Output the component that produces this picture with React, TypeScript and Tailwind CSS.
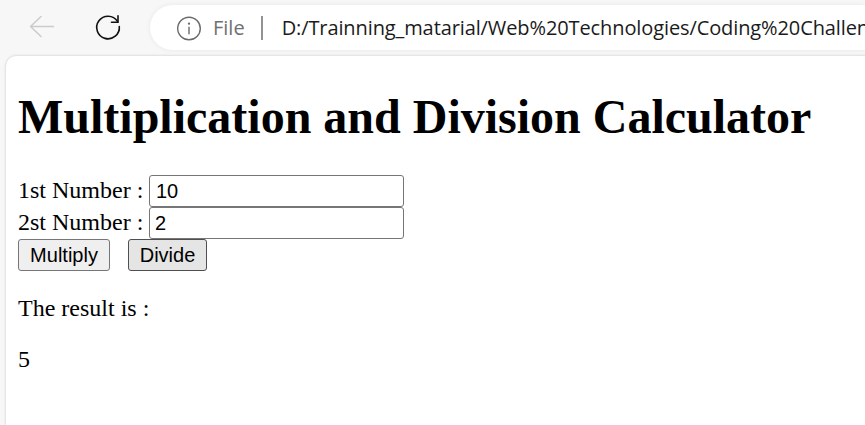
import React from "react";

export default function App() {
  return (
    <div className="h-[425px] w-[865px] overflow-hidden bg-[#f7f7f7] font-['Liberation_Serif',serif] text-black">
      <div className="flex h-[56px] items-start">
        <svg className="mt-[13px] ml-[28px] h-[28px] w-[28px] shrink-0" viewBox="0 0 28 28" fill="none" stroke="#cbcbcb" strokeWidth="1.5" strokeLinecap="round" strokeLinejoin="round">
          <path d="M25.500 13.500H2.500M13 3.500L2.500 13.500L13 23.500" />
        </svg>
        <svg className="mt-[13px] ml-[38px] h-[28px] w-[28px] shrink-0" viewBox="0 0 28 28" fill="none" stroke="#111111" strokeWidth="1.6" strokeLinecap="round">
          <path d="M25.300 13.500A11.300 11.300 0 1 1 23.500 8.300" />
          <path d="M24 2.700V9.300H17.500" strokeLinejoin="miter" />
        </svg>
        <div className="mt-[5px] ml-[28px] flex h-[45px] w-[715px] shrink-0 items-center overflow-hidden rounded-l-full bg-white font-['Open_Sans',sans-serif] text-[20px] shadow-[0_0_5px_rgba(0,0,0,0.07)]">
          <svg className="ml-[26px] h-[26px] w-[26px] shrink-0" viewBox="0 0 26 26" fill="none" stroke="#6b6b6b" strokeWidth="1.4">
            <circle cx="13" cy="13.500" r="11.300" />
            <path d="M13 11.700v7.600" />
            <circle cx="13" cy="8.700" r="1.150" fill="#6b6b6b" stroke="none" />
          </svg>
          <span className="ml-[11px] w-[32px] text-[#707070]">File</span>
          <span className="ml-[16px] h-[24px] w-[2px] shrink-0 bg-[#929292]" />
          <span className="ml-[19px] whitespace-nowrap tracking-[-0.105px] text-[#1b1b1b]">D:/Trainning_matarial/Web%20Technologies/Coding%20Challen</span>
        </div>
      </div>
      <main className="ml-[6px] h-[369px] w-[880px] rounded-tl-[10px] bg-white pl-[12px] pt-[33px] text-[24px] leading-[28px] shadow-[0_0_3px_rgba(0,0,0,0.2)]">
        <h1 className="whitespace-nowrap text-[48px] leading-[55px] font-bold">Multiplication and Division Calculator</h1>
        <div className="mt-[31px] flex h-[32px] items-center">
          <label className="-mt-[2px] w-[131px] whitespace-nowrap">1st Number :</label>
          <input className="h-[32px] w-[255px] rounded-[3px] border border-[#767676] bg-white px-[6px] font-['Liberation_Sans',sans-serif] text-[20px]" defaultValue="10" />
        </div>
        <div className="flex h-[32px] items-center">
          <label className="-mt-[2px] w-[131px] whitespace-nowrap">2st Number :</label>
          <input className="h-[32px] w-[255px] rounded-[3px] border border-[#767676] bg-white px-[5px] font-['Liberation_Sans',sans-serif] text-[20px]" defaultValue="2" />
        </div>
        <div className="flex gap-[18px] font-['Liberation_Sans',sans-serif] text-[20px]">
          <button className="h-[32px] w-[92px] rounded-[3px] border border-[#767676] bg-[#efefef]">Multiply</button>
          <button className="h-[32px] w-[79px] rounded-[3px] border border-[#4f4f4f] bg-[#e5e5e5]">Divide</button>
        </div>
        <p className="mt-[23px]">The result is :</p>
        <p className="mt-[23px]">5</p>
      </main>
    </div>
  );
}
